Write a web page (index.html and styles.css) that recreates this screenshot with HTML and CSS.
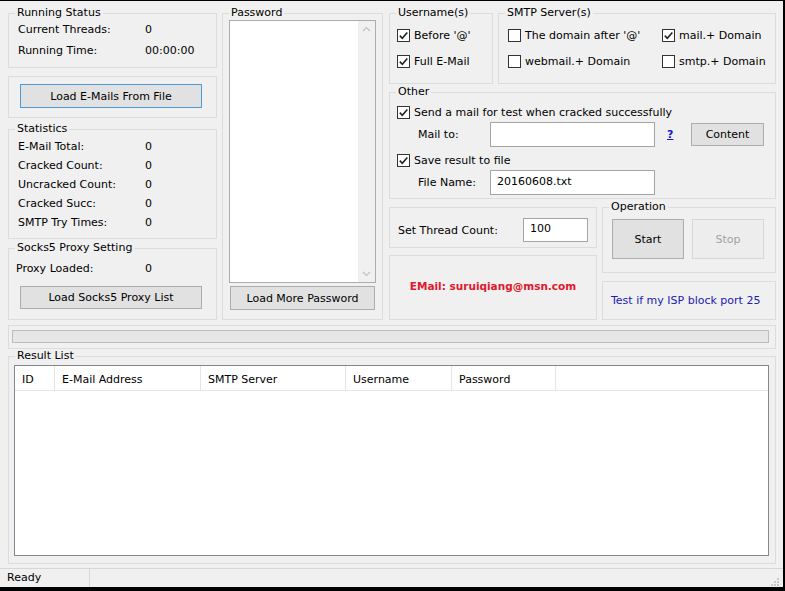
FILE: index.html
```html
<!DOCTYPE html>
<html lang="en">
<head>
    <meta charset="UTF-8">
    <title>Mail Cracker</title>
    <link rel="stylesheet" href="styles.css">
</head>
<body>
    <div class="window">
        <div class="main">
            <div class="top">
                <div class="col-left">
                    <fieldset class="group running">
                        <legend>Running Status</legend>
                        <div class="rows">
                            <div class="row"><span class="label">Current Threads:</span><span>0</span></div>
                            <div class="row"><span class="label">Running Time:</span><span>00:00:00</span></div>
                        </div>
                    </fieldset>
                    <div class="box load-box">
                        <button class="btn btn-default wide">Load E-Mails From File</button>
                    </div>
                    <fieldset class="group stats">
                        <legend>Statistics</legend>
                        <div class="rows">
                            <div class="row"><span class="label">E-Mail Total:</span><span>0</span></div>
                            <div class="row"><span class="label">Cracked Count:</span><span>0</span></div>
                            <div class="row"><span class="label">Uncracked Count:</span><span>0</span></div>
                            <div class="row"><span class="label">Cracked Succ:</span><span>0</span></div>
                            <div class="row"><span class="label">SMTP Try Times:</span><span>0</span></div>
                        </div>
                    </fieldset>
                    <fieldset class="group socks">
                        <legend>Socks5 Proxy Setting</legend>
                        <div class="socks-body">
                            <div class="rows">
                                <div class="row"><span class="label">Proxy Loaded:</span><span>0</span></div>
                            </div>
                            <button class="btn wide">Load Socks5 Proxy List</button>
                        </div>
                    </fieldset>
                </div>

                <fieldset class="group col-pass">
                    <legend>Password</legend>
                    <div class="pass-list">
                        <div class="scrollbar">
                            <svg width="17" height="17" viewBox="0 0 17 17"><path d="M5 10 L8.5 6.5 L12 10" fill="none" stroke="#c2c2c2" stroke-width="1.2"/></svg>
                            <svg width="17" height="17" viewBox="0 0 17 17"><path d="M5 7 L8.5 10.5 L12 7" fill="none" stroke="#c2c2c2" stroke-width="1.2"/></svg>
                        </div>
                    </div>
                    <button class="btn more-btn">Load More Password</button>
                </fieldset>

                <div class="col-right">
                    <div class="row-opts">
                        <fieldset class="group user">
                            <legend>Username(s)</legend>
                            <div class="checks">
                                <div class="check-row"><span class="checkbox on"><svg width="11" height="11" viewBox="0 0 11 11"><path d="M1.8 5.6 L4.3 8.2 L9.3 2.4" fill="none" stroke="#222" stroke-width="1.6"/></svg></span>Before '@'</div>
                                <div class="check-row"><span class="checkbox on"><svg width="11" height="11" viewBox="0 0 11 11"><path d="M1.8 5.6 L4.3 8.2 L9.3 2.4" fill="none" stroke="#222" stroke-width="1.6"/></svg></span>Full E-Mail</div>
                            </div>
                        </fieldset>
                        <fieldset class="group smtp">
                            <legend>SMTP Server(s)</legend>
                            <div class="checks smtp-grid">
                                <div class="check-row"><span class="checkbox"></span>The domain after '@'</div>
                                <div class="check-row"><span class="checkbox on"><svg width="11" height="11" viewBox="0 0 11 11"><path d="M1.8 5.6 L4.3 8.2 L9.3 2.4" fill="none" stroke="#222" stroke-width="1.6"/></svg></span>mail.+ Domain</div>
                                <div class="check-row"><span class="checkbox"></span>webmail.+ Domain</div>
                                <div class="check-row"><span class="checkbox"></span>smtp.+ Domain</div>
                            </div>
                        </fieldset>
                    </div>

                    <fieldset class="group other">
                        <legend>Other</legend>
                        <div class="other-body">
                            <div class="line"><span class="checkbox on"><svg width="11" height="11" viewBox="0 0 11 11"><path d="M1.8 5.6 L4.3 8.2 L9.3 2.4" fill="none" stroke="#222" stroke-width="1.6"/></svg></span>Send a mail for test when cracked successfully</div>
                            <div class="field-row">
                                <span class="field-label">Mail to:</span>
                                <span class="input"></span>
                                <span class="help">?</span>
                                <button class="btn content-btn">Content</button>
                            </div>
                            <div class="line"><span class="checkbox on"><svg width="11" height="11" viewBox="0 0 11 11"><path d="M1.8 5.6 L4.3 8.2 L9.3 2.4" fill="none" stroke="#222" stroke-width="1.6"/></svg></span>Save result to file</div>
                            <div class="field-row">
                                <span class="field-label">File Name:</span>
                                <span class="input">20160608.txt</span>
                            </div>
                        </div>
                    </fieldset>

                    <div class="row-bottom">
                        <div class="sub-left">
                            <div class="box thread">
                                <span class="thread-label">Set Thread Count:</span>
                                <span class="input small">100</span>
                            </div>
                            <div class="box email">EMail: suruiqiang@msn.com</div>
                        </div>
                        <div class="sub-right">
                            <fieldset class="group operation">
                                <legend>Operation</legend>
                                <div class="op-buttons">
                                    <button class="btn">Start</button>
                                    <button class="btn disabled">Stop</button>
                                </div>
                            </fieldset>
                            <div class="box test">Test if my ISP block port 25</div>
                        </div>
                    </div>
                </div>
            </div>

            <div class="box progress-box">
                <div class="progress"></div>
            </div>

            <fieldset class="group result">
                <legend>Result List</legend>
                <div class="listview">
                    <div class="list-head">
                        <span class="col c-id">ID</span>
                        <span class="col c-mail">E-Mail Address</span>
                        <span class="col c-smtp">SMTP Server</span>
                        <span class="col c-user">Username</span>
                        <span class="col c-pass">Password</span>
                    </div>
                </div>
            </fieldset>
        </div>

        <div class="statusbar">
            <span class="status-cell">Ready</span>
            <span class="status-rest"></span>
            <svg class="grip" width="10" height="10" viewBox="0 0 10 10">
                <rect x="7" y="1" width="2" height="2" fill="#c8c8c8"/>
                <rect x="4" y="4" width="2" height="2" fill="#c8c8c8"/>
                <rect x="7" y="4" width="2" height="2" fill="#c8c8c8"/>
                <rect x="1" y="7" width="2" height="2" fill="#c8c8c8"/>
                <rect x="4" y="7" width="2" height="2" fill="#c8c8c8"/>
                <rect x="7" y="7" width="2" height="2" fill="#c8c8c8"/>
            </svg>
        </div>
    </div>
</body>
</html>
```

FILE: styles.css
```css
body {
    margin: 0;
    background: #000;
    font-family: "DejaVu Sans", "Liberation Sans", sans-serif;
    font-size: 11px;
    color: #000;
}
.window {
    width: 783px;
    height: 586px;
    margin-top: 1px;
    background: #f0f0f0;
    display: flex;
    flex-direction: column;
}
.main {
    padding: 5px 7px 0 8px;
    flex: 1;
    display: flex;
    flex-direction: column;
}
.top {
    display: flex;
    height: 314px;
}

/* group boxes */
.group {
    margin: 0;
    padding: 0;
    border: 1px solid #dcdcdc;
    box-sizing: border-box;
    min-width: 0;
}
.group legend {
    margin-left: 6px;
    padding: 0 2px;
    line-height: 14px;
}
.box {
    border: 1px solid #dcdcdc;
    box-sizing: border-box;
}

/* buttons and inputs */
.btn {
    font: inherit;
    color: #000;
    background: #e1e1e1;
    border: 1px solid #adadad;
    padding: 0;
    box-sizing: border-box;
}
.btn-default {
    border-color: #4d9ad8;
}
.btn.disabled {
    background: #ededed;
    border-color: #d6d6d6;
    color: #a2a2a2;
}
.input {
    display: block;
    box-sizing: border-box;
    width: 165px;
    height: 25px;
    border: 1px solid #a4a4a4;
    background: #fff;
    padding: 4px 0 0 6px;
}
.checkbox {
    width: 13px;
    height: 13px;
    border: 1px solid #333;
    background: #fff;
    box-sizing: border-box;
    margin-right: 4px;
    flex: none;
    display: flex;
    align-items: center;
    justify-content: center;
}

/* left column */
.col-left {
    width: 209px;
    display: flex;
    flex-direction: column;
}
.row {
    display: flex;
}
.rows .label {
    width: 127px;
}
.running {
    height: 62px;
}
.running .rows {
    padding-left: 9px;
    margin-top: -1px;
    line-height: 21px;
}
.load-box {
    margin-top: 8px;
    height: 42px;
    padding: 7px 0 0 11px;
}
.wide {
    width: 182px;
    height: 24px;
}
.stats {
    margin-top: 4px;
    height: 117px;
}
.stats .rows {
    padding: 1px 0 0 9px;
    line-height: 19px;
}
.socks {
    margin-top: 2px;
    height: 79px;
}
.socks-body {
    padding-left: 11px;
}
.socks .rows {
    padding-top: 4px;
    margin-left: -4px;
    line-height: 20px;
}
.socks .rows .label {
    width: 129px;
}
.socks .wide {
    margin-top: 7px;
    height: 23px;
}

/* password column */
.col-pass {
    width: 161px;
    margin-left: 5px;
}
.pass-list {
    margin-left: 6px;
    width: 147px;
    height: 263px;
    border: 1px solid #abadb3;
    background: #fff;
    box-sizing: border-box;
    display: flex;
    justify-content: flex-end;
}
.scrollbar {
    width: 17px;
    background: #f0f0f0;
    display: flex;
    flex-direction: column;
    justify-content: space-between;
}
.more-btn {
    margin: 3px 0 0 7px;
    width: 145px;
    height: 24px;
}

/* right column */
.col-right {
    width: 387px;
    margin-left: 6px;
    display: flex;
    flex-direction: column;
}
.row-opts {
    display: flex;
    gap: 5px;
    height: 78px;
}
.user {
    width: 104px;
}
.smtp {
    flex: 1;
}
.checks {
    padding: 2px 0 0 7px;
}
.check-row {
    height: 26px;
    display: flex;
    align-items: center;
}
.smtp-grid {
    display: grid;
    grid-template-columns: 154px 1fr;
    padding-left: 9px;
}
.other {
    margin-top: 1px;
    height: 114px;
}
.other-body {
    padding-left: 7px;
}
.line {
    margin-top: 3px;
    height: 20px;
    display: flex;
    align-items: center;
}
.field-row {
    display: flex;
    align-items: center;
    height: 25px;
    padding-left: 21px;
}
.field-label {
    width: 72px;
}
.help {
    width: 24px;
    margin-left: 12px;
    color: #1515c8;
    font-weight: bold;
    text-decoration: underline;
}
.content-btn {
    width: 73px;
    height: 23px;
}
.row-bottom {
    display: flex;
    gap: 5px;
    margin-top: 1px;
}
.sub-left {
    width: 208px;
}
.thread {
    margin-top: 7px;
    height: 41px;
    display: flex;
    align-items: center;
    padding: 5px 0 0 8px;
}
.thread-label {
    width: 125px;
}
.input.small {
    width: 65px;
    height: 24px;
    padding-top: 3px;
}
.email {
    margin-top: 7px;
    height: 65px;
    display: flex;
    align-items: center;
    justify-content: center;
    padding-bottom: 3px;
    color: #e0182c;
    font-weight: bold;
    font-size: 10.5px;
}
.sub-right {
    width: 174px;
}
.operation {
    height: 73px;
}
.op-buttons {
    display: flex;
    gap: 8px;
    padding: 5px 0 0 9px;
}
.op-buttons .btn {
    width: 72px;
    height: 40px;
}
.test {
    margin-top: 8px;
    height: 39px;
    display: flex;
    align-items: center;
    padding-left: 8px;
    color: #2020b0;
}

/* progress and result list */
.progress-box {
    margin-top: 5px;
    height: 24px;
    padding: 4px 6px 0 3px;
}
.progress {
    height: 13px;
    border: 1px solid #bcbcbc;
    background: #e6e6e6;
    box-sizing: border-box;
}
.result {
    height: 215px;
}
.listview {
    margin: 2px 0 0 5px;
    width: 755px;
    height: 191px;
    border: 1px solid #828790;
    background: #fff;
    box-sizing: border-box;
}
.list-head {
    display: flex;
    height: 25px;
    border-bottom: 1px solid #e5e5e5;
    box-sizing: border-box;
}
.col {
    box-sizing: border-box;
    border-right: 1px solid #e5e5e5;
    padding: 2px 0 0 7px;
    line-height: 24px;
}
.c-id { width: 40px; }
.c-mail { width: 146px; }
.c-smtp { width: 145px; }
.c-user { width: 106px; }
.c-pass { width: 104px; }

/* status bar */
.statusbar {
    margin-top: 4px;
    height: 19px;
    border-top: 1px solid #d7d7d7;
    box-sizing: border-box;
    display: flex;
}
.status-cell {
    width: 90px;
    padding-left: 7px;
    border-right: 1px solid #d7d7d7;
    box-sizing: border-box;
    line-height: 18px;
}
.status-rest {
    flex: 1;
}
.grip {
    align-self: flex-end;
    margin: 0 3px 0 0;
}
```
